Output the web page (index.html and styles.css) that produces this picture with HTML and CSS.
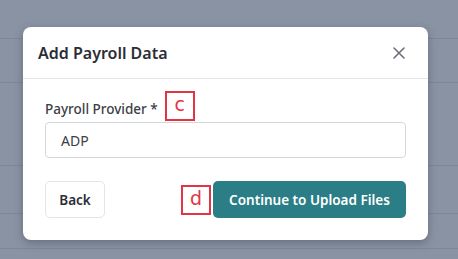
FILE: index.html
```html
<!DOCTYPE html>
<html>
<head>
<meta charset="utf-8">
<link rel="stylesheet" href="styles.css">
</head>
<body>
<div class="backdrop">
  <div class="row r1"></div>
  <div class="row r2"></div>
  <div class="row r3"></div>
  <div class="row r4"></div>
  <div class="row r5"></div>
</div>
<div class="modal">
  <div class="modal-header">
    <h2 class="title">Add Payroll Data</h2>
    <svg class="close" width="12" height="12" viewBox="0 0 12 12"><path d="M1 1L11 11M11 1L1 11" stroke="#6b6f78" stroke-width="1.6" stroke-linecap="round"/></svg>
  </div>
  <div class="modal-body">
    <div class="label-row">
      <label class="label">Payroll Provider *</label>
      <span class="marker marker-c">c</span>
    </div>
    <div class="input">ADP</div>
    <div class="actions">
      <button class="btn btn-back">Back</button>
      <div class="right">
        <span class="marker marker-d">d</span>
        <button class="btn btn-primary">Continue to Upload Files</button>
      </div>
    </div>
  </div>
</div>
</body>
</html>
```
FILE: styles.css
```css
* { box-sizing: border-box; }
html, body { margin: 0; padding: 0; }
body {
  width: 458px;
  height: 259px;
  overflow: hidden;
  background: #8a93a3;
  font-family: "Noto Sans", "Open Sans", sans-serif;
  position: relative;
}
.backdrop { display: flex; flex-direction: column; }
.row { border-bottom: 1px solid #7e8797; }
.r1 { height: 39px; }
.r2 { height: 44px; }
.r3 { height: 83px; }
.r4 { height: 48px; }
.r5 { height: 35px; }
.modal {
  position: absolute;
  left: 23px;
  top: 27px;
  width: 405px;
  height: 213px;
  background: #fff;
  border-radius: 8px;
  box-shadow: 0 3px 8px rgba(40, 45, 60, 0.35);
}
.modal-header {
  height: 52px;
  border-bottom: 1px solid #e4e6ea;
  display: flex;
  align-items: center;
  justify-content: space-between;
  padding: 0 23px 0 15px;
}
.title {
  margin: 0;
  font-size: 16px;
  font-weight: 600;
  color: #2b2e35;
}
.close { display: block; }
.modal-body { padding: 11px 22px 0 22px; }
.label-row {
  display: flex;
  align-items: center;
  height: 32px;
}
.label {
  font-size: 13.5px;
  font-weight: 500;
  color: #3c4048;
  padding-top: 5px;
}
.marker {
  display: inline-flex;
  align-items: center;
  justify-content: center;
  border: 2px solid #e33445;
  color: #e33445;
  font-family: "DejaVu Sans", sans-serif;
  font-size: 19px;
  line-height: 1;
}
.marker-c {
  width: 30px;
  height: 30px;
  margin-left: 7px;
  padding-bottom: 3px;
}
.marker-d {
  width: 30px;
  height: 30px;
  margin-right: 2px;
  padding-bottom: 3px;
}
.input {
  height: 36px;
  border: 1px solid #d4d7dc;
  border-radius: 4px;
  padding: 0 15px;
  display: flex;
  align-items: center;
  font-size: 14px;
  color: #3c4048;
}
.actions {
  margin-top: 23px;
  display: flex;
  justify-content: space-between;
  align-items: center;
}
.right { display: flex; align-items: center; }
.btn {
  height: 37px;
  border-radius: 5px;
  font-family: "Noto Sans", "Open Sans", sans-serif;
  font-size: 13.5px;
  font-weight: 600;
  padding: 0;
  cursor: pointer;
}
.btn-back {
  width: 60px;
  background: #fff;
  border: 1px solid #e3e5e9;
  color: #2b2e35;
}
.btn-primary {
  width: 193px;
  background: #2b7e86;
  border: none;
  color: #fff;
}
```
